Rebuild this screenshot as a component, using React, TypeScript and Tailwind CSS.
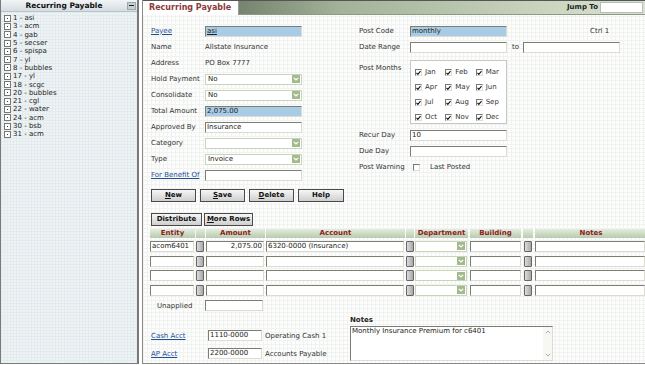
/*
 * RecurringPayable — legacy accounting screen: a list of recurring payables on
 * the left and the edit form (payee, schedule, distribution grid) on the right.
 */
import React from 'react';

const font = "font-['DejaVu_Sans',Verdana,sans-serif]";

const LIST = ['1 - asi', '3 - acm', '4 - gab', '5 - secser', '6 - spispa', '7 - yl', '8 - bubbles', '17 - yl', '18 - scgc', '20 - bubbles', '21 - cgl', '22 - water', '24 - acm', '30 - bsb', '31 - acm'];
const MONTHS = ['Jan', 'Feb', 'Mar', 'Apr', 'May', 'Jun', 'Jul', 'Aug', 'Sep', 'Oct', 'Nov', 'Dec'];

const Input: React.FC<{ w: string; value?: string; blue?: boolean; right?: boolean; link?: boolean }> = ({ w, value, blue, right, link }) => (
  <div
    className={`${w} h-[11px] shrink-0 border border-t-[#7d7d74] border-l-[#7d7d74] border-b-[#dcdcd0] border-r-[#dcdcd0] px-[1px] text-[7px] leading-[9px] text-[#222] overflow-hidden whitespace-nowrap ${blue ? 'bg-[#a8cce6]' : 'bg-white'} ${right ? 'text-right' : ''} ${link ? 'underline text-[#1d3f8c]' : ''}`}
  >
    {value}
  </div>
);

const Select: React.FC<{ w: string; value?: string }> = ({ w, value }) => (
  <div className={`${w} h-[11px] shrink-0 flex items-center border border-[#c9d5bb] bg-white`}>
    <span className="flex-1 pl-[2px] text-[7px] leading-[9px] text-[#222]">{value}</span>
    <span className="w-[8px] h-[8px] mr-[1px] bg-[#a5b98f] flex items-center justify-center">
      <svg width="6" height="4" viewBox="0 0 6 4"><path d="M0.8 0.8 L3 3 L5.2 0.8" stroke="white" strokeWidth="1.2" fill="none" /></svg>
    </span>
  </div>
);

const Check: React.FC<{ on?: boolean }> = ({ on }) => (
  <span className="w-[7px] h-[7px] shrink-0 border border-t-[#777] border-l-[#777] border-b-[#ddd] border-r-[#ddd] bg-white flex items-center justify-center">
    {on && (
      <svg width="6" height="6" viewBox="0 0 6 6"><path d="M0.6 2.8 L2.2 4.6 L5.4 0.8" stroke="#111" strokeWidth="1.3" fill="none" /></svg>
    )}
  </span>
);

const Btn: React.FC<{ w: string; u?: string; rest: string }> = ({ w, u, rest }) => (
  <div className={`${w} h-[13px] shrink-0 flex items-center justify-center border border-[#4a4a4a] bg-[linear-gradient(to_bottom,#f6f6f6,#cfcfcf)] text-[7px] font-bold text-[#111]`}>
    {u && <span className="underline">{u}</span>}
    {rest}
  </div>
);

const MiniBtn = () => (
  <div className="w-[8px] h-[11px] shrink-0 rounded-[1px] border border-[#666] bg-[linear-gradient(to_right,#dcdcdc,#a8a8a8)]" />
);

const Label: React.FC<{ w: string; children: React.ReactNode; link?: boolean }> = ({ w, children, link }) => (
  <span className={`${w} shrink-0 text-[7px] ${link ? 'underline text-[#1d4f96]' : 'text-[#333]'}`}>{children}</span>
);

const Row: React.FC<{ children: React.ReactNode; className?: string }> = ({ children, className }) => (
  <div className={`h-4 flex items-center ${className ?? ''}`}>{children}</div>
);

const HeadCell: React.FC<{ w: string; text?: string }> = ({ w, text }) => (
  <div className={`${w} h-[9px] shrink-0 flex items-center justify-center bg-[linear-gradient(to_bottom,#e4ecdd,#b8cbb0)] text-[7px] font-bold text-[#8a1c1c]`}>{text}</div>
);

const GridRow: React.FC<{ entity?: string; amount?: string; account?: string }> = ({ entity, amount, account }) => (
  <div className="h-[14.7px] flex items-center">
    <Input w="w-[44px]" value={entity} />
    <div className="w-[2px]" />
    <MiniBtn />
    <div className="w-[2px]" />
    <Input w="w-[58px]" value={amount} right />
    <div className="w-[2px]" />
    <Input w="w-[138px]" value={account} />
    <div className="w-[2px]" />
    <MiniBtn />
    <div className="w-[1px]" />
    <Select w="w-[52px]" />
    <div className="w-[3px]" />
    <Input w="w-[51px]" />
    <div className="w-[3px]" />
    <MiniBtn />
    <div className="w-[3px]" />
    <Input w="w-[110px]" />
  </div>
);

export default function App() {
  return (
    <div className={`w-[645px] h-[365px] flex bg-white overflow-hidden ${font}`}>
      {/* Left list */}
      <div className="w-[139px] h-[364px] shrink-0 border-l border-b border-r-2 border-[#7a7a7a] bg-[#eef3f4] bg-[linear-gradient(to_right,#e4ebee_1px,transparent_1px),linear-gradient(to_bottom,#e4ebee_1px,transparent_1px)] bg-[size:3px_3px]">
        <div className="h-[12px] flex items-center bg-[linear-gradient(to_bottom,#f2f5f7,#d5dde2)] border-b border-[#b8c2c8]">
          <span className="flex-1 text-center text-[7.5px] font-bold text-[#111]">Recurring Payable</span>
          <span className="w-[9px] h-[8px] mr-[1px] flex items-center justify-center bg-[#c8cdd0] border border-[#9aa]">
            <span className="w-[5px] h-[1.5px] bg-[#222]" />
          </span>
        </div>
        <div className="pt-[2px] pl-[3px]">
          {LIST.map((item) => (
            <div key={item} className="h-[8.3px] flex items-center gap-[2px]">
              <span className="w-[7px] h-[7px] border border-[#777] bg-white flex items-center justify-center">
                <span className="w-[1px] h-[1px] bg-[#333]" />
              </span>
              <span className="text-[7px] text-[#222] leading-[8px]">{item}</span>
            </div>
          ))}
        </div>
      </div>

      <div className="w-[3px] shrink-0" />

      {/* Main panel */}
      <div className="flex-1 h-[364px] border-l border-b border-[#8a8a8a] bg-[#fcfdfc] bg-[linear-gradient(to_right,#f1f3f0_1px,transparent_1px),linear-gradient(to_bottom,#f1f3f0_1px,transparent_1px)] bg-[size:4px_4px] flex flex-col">
        {/* Header */}
        <div className="h-[15px] shrink-0 flex border-t border-[#555]">
          <div className="w-[96px] flex items-center pl-[6px] bg-white border-r border-[#999] text-[8px] font-bold text-[#8b3a3a]">Recurring Payable</div>
          <div className="flex-1 flex items-center justify-end bg-[linear-gradient(to_right,#76846f,#a3b298_25%,#cdd8c3_80%,#d9e1d1)] border-b border-[#8c9a86]">
            <span className="text-[7px] font-bold text-[#222] mr-[2px]">Jump To</span>
            <div className="w-[43px] h-[11px] bg-white border border-[#bbb] mr-[4px]" />
          </div>
        </div>

        <div className="pl-[8px]">
          {/* Top form */}
          <div className="flex pt-[8px]">
            <div className="w-[208px] shrink-0">
              <Row><Label w="w-[54px]" link>Payee</Label><Input w="w-[97px]" value="asi" blue link /></Row>
              <Row><Label w="w-[54px]">Name</Label><span className="text-[7px] text-[#333]">Allstate Insurance</span></Row>
              <Row><Label w="w-[54px]">Address</Label><span className="text-[7px] text-[#333]">PO Box 7777</span></Row>
              <Row><Label w="w-[54px]">Hold Payment</Label><Select w="w-[97px]" value="No" /></Row>
              <Row><Label w="w-[54px]">Consolidate</Label><Select w="w-[97px]" value="No" /></Row>
              <Row><Label w="w-[54px]">Total Amount</Label><Input w="w-[97px]" value="2,075.00" blue /></Row>
              <Row><Label w="w-[54px]">Approved By</Label><Input w="w-[97px]" value="Insurance" /></Row>
              <Row><Label w="w-[54px]">Category</Label><Select w="w-[97px]" /></Row>
              <Row><Label w="w-[54px]">Type</Label><Select w="w-[97px]" value="Invoice" /></Row>
              <Row><Label w="w-[54px]" link>For Benefit Of</Label><Input w="w-[97px]" /></Row>
              <div className="flex gap-[4px] mt-[6px]">
                <Btn w="w-[45px]" u="N" rest="ew" />
                <Btn w="w-[45px]" u="S" rest="ave" />
                <Btn w="w-[45px]" u="D" rest="elete" />
                <Btn w="w-[46px]" rest="Help" />
              </div>
            </div>

            <div className="flex-1">
              <Row>
                <Label w="w-[51px]">Post Code</Label>
                <Input w="w-[97px]" value="monthly" blue />
                <span className="ml-[83px] text-[7px] text-[#333]">Ctrl 1</span>
              </Row>
              <Row>
                <Label w="w-[51px]">Date Range</Label>
                <Input w="w-[97px]" />
                <span className="ml-[5px] w-[11px] text-[7px] text-[#333]">to</span>
                <Input w="w-[97px]" />
              </Row>
              <div className="flex mt-[5px]">
                <span className="w-[51px] pt-[3px] text-[7px] text-[#333]">Post Months</span>
                <div className="w-[97px] h-[64px] border border-[#c8c8c0] bg-white grid grid-cols-3 content-start pt-[4px] pl-[4px]">
                  {MONTHS.map((m) => (
                    <div key={m} className="h-[15px] flex items-center gap-[3px]">
                      <Check on />
                      <span className="text-[7px] text-[#333]">{m}</span>
                    </div>
                  ))}
                </div>
              </div>
              <Row className="mt-[3px]"><Label w="w-[51px]">Recur Day</Label><Input w="w-[97px]" value="10" /></Row>
              <Row><Label w="w-[51px]">Due Day</Label><Input w="w-[97px]" /></Row>
              <Row>
                <Label w="w-[54px]">Post Warning</Label>
                <Check />
                <span className="ml-[10px] text-[7px] text-[#333]">Last Posted</span>
              </Row>
            </div>
          </div>

          {/* Distribution grid */}
          <div className="flex gap-[2px] mt-[11px]">
            <Btn w="w-[51px]" rest="Distribute" />
            <Btn w="w-[49px]" u="M" rest="ore Rows" />
          </div>
          <div className="flex mt-[3px] -ml-[1px]">
            <HeadCell w="w-[45px]" text="Entity" />
            <div className="w-[1px]" />
            <HeadCell w="w-[9px]" />
            <div className="w-[1px]" />
            <HeadCell w="w-[59px]" text="Amount" />
            <div className="w-[1px]" />
            <HeadCell w="w-[139px]" text="Account" />
            <div className="w-[1px]" />
            <HeadCell w="w-[8px]" />
            <div className="w-[1px]" />
            <HeadCell w="w-[53px]" text="Department" />
            <div className="w-[2px]" />
            <HeadCell w="w-[51px]" text="Building" />
            <div className="w-[2px]" />
            <HeadCell w="w-[10px]" />
            <div className="w-[2px]" />
            <HeadCell w="w-[112px]" text="Notes" />
          </div>
          <div className="-ml-[1px] mt-[1px]">
            <GridRow entity="acom6401" amount="2,075.00" account="6320-0000 (Insurance)" />
            <GridRow />
            <GridRow />
            <GridRow />
          </div>
          <div className="h-[14px] flex items-center mt-[1px]">
            <span className="w-[54px] pl-[6px] text-[7px] text-[#333]">Unapplied</span>
            <Input w="w-[58px]" />
          </div>

          {/* Accounts and notes */}
          <div className="flex mt-[2px]">
            <div className="w-[199px] shrink-0 pt-[15px] flex flex-col gap-[6px]">
              <div className="h-[12px] flex items-center">
                <Label w="w-[57px]" link>Cash Acct</Label>
                <Input w="w-[54px]" value="1110-0000" />
                <span className="ml-[3px] text-[7px] text-[#333]">Operating Cash 1</span>
              </div>
              <div className="h-[12px] flex items-center">
                <Label w="w-[57px]" link>AP Acct</Label>
                <Input w="w-[54px]" value="2200-0000" />
                <span className="ml-[3px] text-[7px] text-[#333]">Accounts Payable</span>
              </div>
            </div>
            <div>
              <div className="h-[10px] text-[7px] font-bold text-[#222] leading-[10px]">Notes</div>
              <div className="w-[203px] h-[35px] mt-[1px] flex border border-t-[#7d7d74] border-l-[#7d7d74] border-b-[#dcdcd0] border-r-[#dcdcd0] bg-white">
                <span className="flex-1 px-[1px] text-[7px] leading-[9px] text-[#222]">Monthly Insurance Premium for c6401</span>
                <div className="w-[9px] flex flex-col justify-between items-center py-[3px] bg-[#f7f7f4]">
                  <svg width="6" height="4" viewBox="0 0 6 4"><path d="M0.8 3.2 L3 1 L5.2 3.2" stroke="#aaa" strokeWidth="1" fill="none" /></svg>
                  <svg width="6" height="4" viewBox="0 0 6 4"><path d="M0.8 0.8 L3 3 L5.2 0.8" stroke="#aaa" strokeWidth="1" fill="none" /></svg>
                </div>
              </div>
            </div>
          </div>
        </div>
      </div>
    </div>
  );
}
